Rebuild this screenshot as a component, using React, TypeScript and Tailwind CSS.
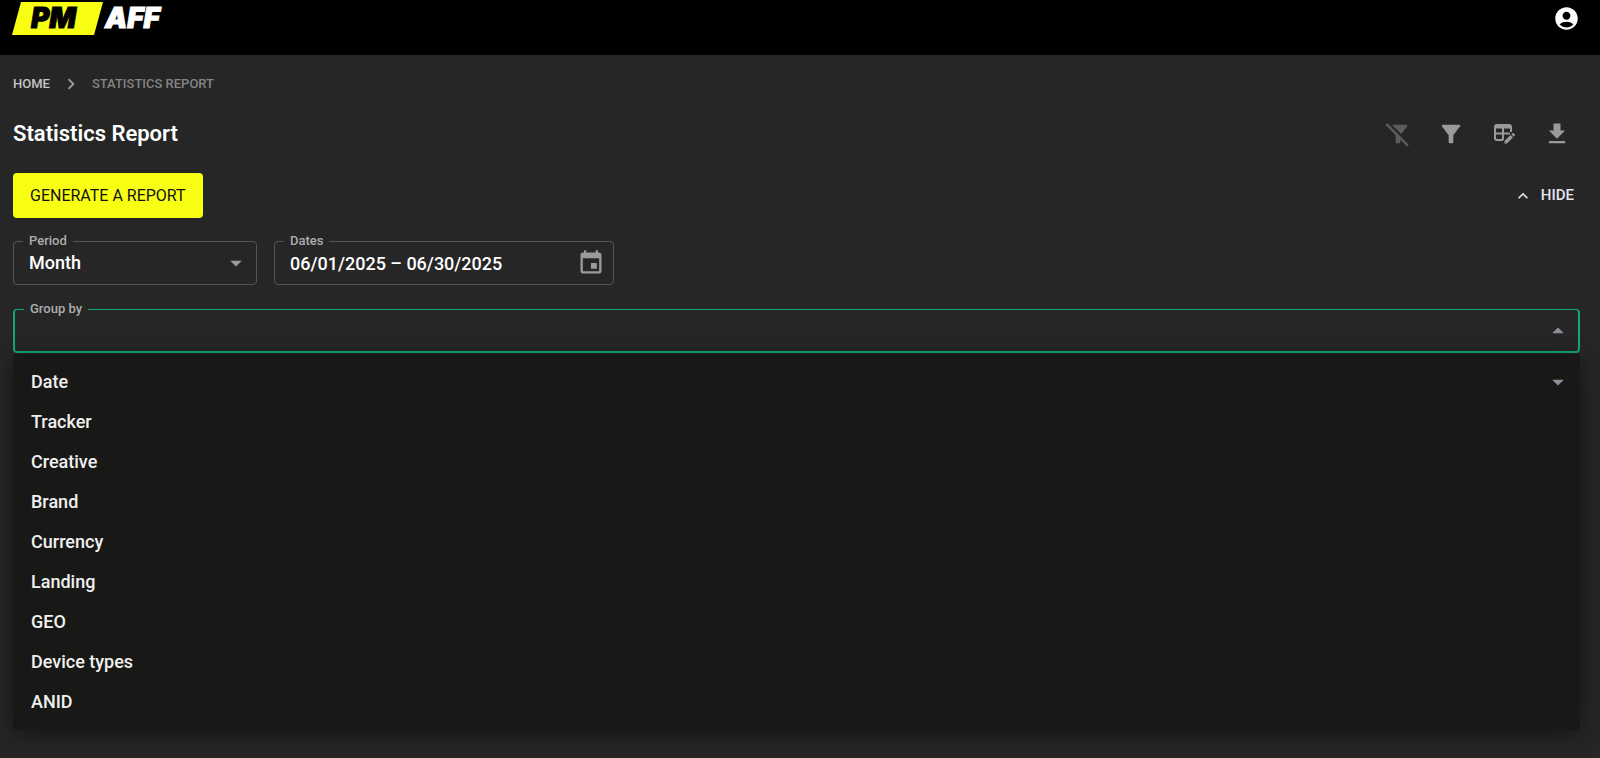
import { useState } from "react";
import type { ReactNode } from "react";
import {
  MdAccountCircle,
  MdArrowDropDown,
  MdArrowDropUp,
  MdChevronRight,
  MdEvent,
  MdFilterAlt,
  MdFilterAltOff,
  MdKeyboardArrowUp,
} from "react-icons/md";

const GROUPS = ["Date", "Tracker", "Creative", "Brand", "Currency", "Landing", "GEO", "Device types", "ANID"];

function Logo() {
  return (
    <a href="#" aria-label="PM AFF" className="block">
      <svg width="164" height="36" viewBox="0 0 164 36" fontFamily="Inter, 'Liberation Sans', sans-serif">
        <path d="M9 2H91L82 35H0Z" fill="#f9ff13" />
        <text x="19" y="28" fontSize="28" fontWeight="900" fontStyle="italic" fill="#000" stroke="#000">PM</text>
        <text x="93" y="28" fontSize="28" fontWeight="900" fontStyle="italic" fill="#fff" stroke="#fff">AFF</text>
      </svg>
    </a>
  );
}

function TableEditIcon() {
  return (
    <svg width="28" height="28" viewBox="0 0 28 28" fill="none" stroke="currentColor" strokeWidth="2">
      <path d="M13 20H7a2 2 0 0 1-2-2V7a2 2 0 0 1 2-2h12a2 2 0 0 1 2 2v5" />
      <path d="M5 7h16" strokeWidth="3" />
      <path d="M5 13.500h15M13 8v12" />
      <path d="M14.500 23.500v-2.500l6-6 2.500 2.500-6 6z" fill="currentColor" stroke="none" />
      <path d="M21.300 14.200l1-1c.3-.3.8-.3 1.100 0l1.400 1.400c.3.300.3.800 0 1.100l-1 1z" fill="currentColor" stroke="none" />
    </svg>
  );
}

function DownloadIcon() {
  return (
    <svg width="28" height="28" viewBox="0 0 24 24" fill="currentColor">
      <path d="M19 9h-4V3H9v6H5l7 7 7-7zM5 18v2h14v-2H5z" />
    </svg>
  );
}

function Field({ id, label, className, children }: { id: string; label: string; className: string; children: ReactNode }) {
  return (
    <div className={`relative flex items-center h-11 rounded ${className}`}>
      <label htmlFor={id} className="absolute -top-[11px] left-[9px] px-1.5 bg-[#262626] text-[13px] leading-5 font-medium text-[#acacac]">
        {label}
      </label>
      {children}
    </div>
  );
}

export default function App() {
  const [open, setOpen] = useState(true);
  const [group, setGroup] = useState("");

  return (
    <div className="min-h-screen bg-[#262626] text-white font-[Roboto,sans-serif]">
      <header className="flex items-start justify-between h-[55px] bg-black pl-3 pr-5">
        <Logo />
        <button aria-label="Account" className="mt-[5px]">
          <MdAccountCircle className="size-[27px]" />
        </button>
      </header>

      <main className="pl-[13px] pr-5">
        <nav aria-label="Breadcrumb" className="flex items-center pt-[18px] text-[13px] leading-5 font-medium">
          <a href="#" className="text-[#c4c4c4]">HOME</a>
          <MdChevronRight className="size-[22px] mx-2.5 text-[#a0a0a0]" />
          <span className="text-[#848484]">STATISTICS REPORT</span>
        </nav>

        <div className="flex items-center justify-between mt-[23px]">
          <h1 className="text-[22px] leading-8 font-semibold">Statistics Report</h1>
          <div className="flex items-center gap-[25px] pr-[9px] text-[#9a9a9a]">
            <button aria-label="Clear filters" disabled className="text-[#5c5c5c]">
              <MdFilterAltOff className="size-7" />
            </button>
            <button aria-label="Filters">
              <MdFilterAlt className="size-7" />
            </button>
            <button aria-label="Edit columns"><TableEditIcon /></button>
            <button aria-label="Download"><DownloadIcon /></button>
          </div>
        </div>

        <div className="flex items-center justify-between mt-[23px]">
          <button className="h-[45px] px-[17px] rounded bg-[#f9ff13] text-base text-[#121212]">
            GENERATE A REPORT
          </button>
          <button className="flex items-center gap-2 pr-1.5 text-[15px] font-medium text-[#e4e4f0]">
            <MdKeyboardArrowUp className="size-5" />
            HIDE
          </button>
        </div>

        <div className="flex gap-[17px] mt-[23px]">
          <Field id="period" label="Period" className="w-[244px] border border-[#555]">
            <select id="period" className="size-full appearance-none bg-transparent pl-[15px] text-lg font-medium outline-none">
              <option>Month</option>
            </select>
            <MdArrowDropDown className="absolute right-1.5 size-7 text-[#9a9a9a] pointer-events-none" />
          </Field>
          <Field id="dates" label="Dates" className="w-[340px] border border-[#555]">
            <input
              id="dates"
              defaultValue="06/01/2025 – 06/30/2025"
              className="min-w-0 flex-1 h-full bg-transparent pl-[15px] text-lg font-medium outline-none"
            />
            <button aria-label="Choose dates" className="mr-2 text-[#9a9a9a]">
              <MdEvent className="size-7" />
            </button>
          </Field>
        </div>

        <div className="relative mt-6">
          <Field id="group" label="Group by" className="border-2 border-t border-[#13a873]">
            <input
              id="group"
              value={group}
              onChange={(e) => setGroup(e.target.value)}
              className="min-w-0 flex-1 h-full bg-transparent pl-[15px] text-lg font-medium outline-none"
            />
            <button aria-label="Toggle groups" onClick={() => setOpen(!open)} className="mr-1.5 text-[#8c8e9c]">
              <MdArrowDropUp className="size-7" />
            </button>
          </Field>

          {open && (
            <ul className="absolute top-full inset-x-0 mt-px py-2 rounded bg-[#181816] shadow-[0_5px_24px_rgba(0,0,0,0.45)]">
              {GROUPS.map((name) => (
                <li key={name}>
                  <button
                    onClick={() => setGroup(name)}
                    className="flex items-center justify-between w-full h-10 pl-[18px] pr-2 text-lg font-medium text-[#f0f0f0]"
                  >
                    {name}
                    {name === "Date" && <MdArrowDropDown className="size-7 text-[#8c8e9c]" />}
                  </button>
                </li>
              ))}
            </ul>
          )}
        </div>
      </main>
    </div>
  );
}
